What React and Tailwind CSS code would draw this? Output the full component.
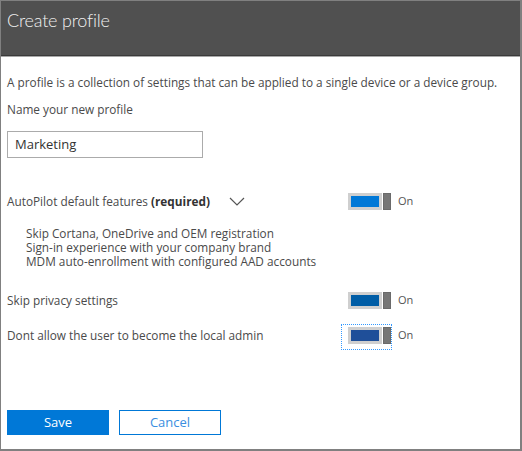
import React from "react";

function Toggle({ color, focused }) {
  return (
    <div className="relative flex items-center">
      {focused && (
        <span className="absolute left-[-7px] top-[-3px] w-[51px] h-[26px] border border-dotted border-[#3399ff]" />
      )}
      <div className="w-[34px] h-[17px] bg-[#cfcfcf] p-[3px]">
        <div className="w-full h-full" style={{ backgroundColor: color }} />
      </div>
      <div className="w-[8px] h-[17px] bg-[#767676] ml-[1px] border border-[#6a6a6a]" />
      <span className="ml-[7px] text-[11px] text-[#555]">On</span>
    </div>
  );
}

export default function App() {
  return (
    <div
      className="w-[522px] h-[451px] flex flex-col bg-white border-l border-t border-r-2 border-b-2 border-[#808080]"
      style={{ fontFamily: '"Open Sans", "Noto Sans", sans-serif' }}
    >
      <div className="h-[55px] bg-[#505050] border-b border-[#3a3a3a] px-[6px] pt-[7px]">
        <div
          className="text-[18px] leading-[24px] font-light text-[#f0f0f0] tracking-[-0.2px]"
          style={{ fontFamily: 'Lato, "Open Sans", sans-serif' }}
        >
          Create profile
        </div>
      </div>
      <div className="h-[1px] bg-[#a8a8a8]" />
      <div className="flex flex-col px-[6px] text-[11.8px] text-[#4a4a4a]">
        <div className="mt-[17px] leading-[16px]">
          A profile is a collection of settings that can be applied to a single device or a device group.
        </div>
        <div className="mt-[11px] leading-[16px]">Name your new profile</div>
        <div className="mt-[14px] w-[196px] h-[27px] border border-[#ababab] flex items-center px-[7px] text-[13px] text-[#333]">
          Marketing
        </div>
        <div className="mt-[35px] flex items-center h-[17px]">
          <div className="w-[341px] flex items-center">
            <span>
              AutoPilot default features <span className="font-bold text-[#333]">(required)</span>
            </span>
            <svg className="ml-[19px]" width="16" height="9" viewBox="0 0 16 9">
              <path d="M1 1 L8 8 L15 1" fill="none" stroke="#555" strokeWidth="1.2" />
            </svg>
          </div>
          <Toggle color="#0078d7" />
        </div>
        <div className="mt-[16px] pl-[19px] leading-[14px]">
          <div>Skip Cortana, OneDrive and OEM registration</div>
          <div>Sign-in experience with your company brand</div>
          <div>MDM auto-enrollment with configured AAD accounts</div>
        </div>
        <div className="mt-[24px] flex items-center h-[17px]">
          <div className="w-[341px]">Skip privacy settings</div>
          <Toggle color="#005da6" />
        </div>
        <div className="mt-[18px] flex items-center h-[17px]">
          <div className="w-[341px]">Dont allow the user to become the local admin</div>
          <Toggle color="#1f4f99" focused />
        </div>
        <div className="mt-[66px] flex gap-[10px]">
          <button className="w-[102px] h-[25px] bg-[#0078d7] text-white text-[13px] flex items-center justify-center">
            Save
          </button>
          <button className="w-[102px] h-[25px] border border-[#0078d7] text-[#3a8ee0] text-[13px] flex items-center justify-center">
            Cancel
          </button>
        </div>
      </div>
    </div>
  );
}
